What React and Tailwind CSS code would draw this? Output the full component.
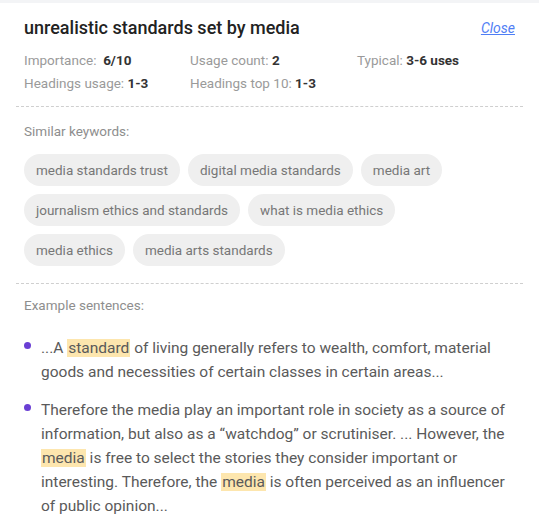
import React from "react";

const keywords = [
  "media standards trust",
  "digital media standards",
  "media art",
  "journalism ethics and standards",
  "what is media ethics",
  "media ethics",
  "media arts standards",
];

const Mark = ({ children }) => (
  <span className="bg-[#fde6ae] px-[1px]">{children}</span>
);

const Stat = ({ label, value }) => (
  <div>
    <span className="text-[#9a9a9a]">{label}</span>{" "}
    <span className="font-bold text-[#333]">{value}</span>
  </div>
);

export default function App() {
  return (
    <div className="w-[539px] h-[532px] bg-white font-['Roboto',sans-serif] overflow-hidden">
      <div className="h-[3px] bg-[#f3f4f6]" />
      <div className="px-6 pt-[13px]">
        {/* Header */}
        <div className="flex items-center justify-between">
          <h1 className="text-[18px] leading-6 font-medium text-[#222]">
            unrealistic standards set by media
          </h1>
          <a href="#" className="text-[14px] italic underline text-[#4f7ef5]">
            Close
          </a>
        </div>

        {/* Stats */}
        <div className="mt-[9px] text-[13.5px] leading-[23px] grid grid-cols-[166px_167px_1fr]">
          <Stat label={"Importance:\u00a0"} value="6/10" />
          <Stat label="Usage count:" value="2" />
          <Stat label="Typical:" value="3-6 uses" />
          <Stat label="Headings usage:" value="1-3" />
          <Stat label="Headings top 10:" value="1-3" />
        </div>
      </div>

      <div className="mx-4 mt-[11px] border-t border-dashed border-[#cfcfcf]" />

      <div className="px-6">
        <p className="mt-[14px] text-[13.5px] leading-5 text-[#8e8e8e]">Similar keywords:</p>
        <div className="mt-[13px] flex flex-wrap gap-2 w-[460px]">
          {keywords.map((k) => (
            <span
              key={k}
              className="h-[32px] px-3 flex items-center rounded-full bg-[#efefef] text-[13.5px] text-[#777]"
            >
              {k}
            </span>
          ))}
        </div>
      </div>

      <div className="mx-4 mt-[17px] border-t border-dashed border-[#cfcfcf]" />

      <div className="px-6">
        <p className="mt-[11px] text-[13.5px] leading-5 text-[#8e8e8e]">Example sentences:</p>
        <ul className="mt-[21px] space-y-[14px] text-[15.5px] leading-6 text-[#5a5a5a]">
          <li className="flex">
            <span className="mt-[6px] mr-[10px] w-[7px] h-[7px] shrink-0 rounded-full bg-[#6a3fd4]" />
            <p>
              ...A <Mark>standard</Mark> of living generally refers to wealth, comfort, material
              goods and necessities of certain classes in certain areas...
            </p>
          </li>
          <li className="flex">
            <span className="mt-[6px] mr-[10px] w-[7px] h-[7px] shrink-0 rounded-full bg-[#6a3fd4]" />
            <p>
              Therefore the media play an important role in society as a source of
              information, but also as a “watchdog” or scrutiniser. ... However, the{" "}
              <Mark>media</Mark> is free to select the stories they consider important or
              interesting. Therefore, the <Mark>media</Mark> is often perceived as an influencer
              of public opinion...
            </p>
          </li>
        </ul>
      </div>
    </div>
  );
}
